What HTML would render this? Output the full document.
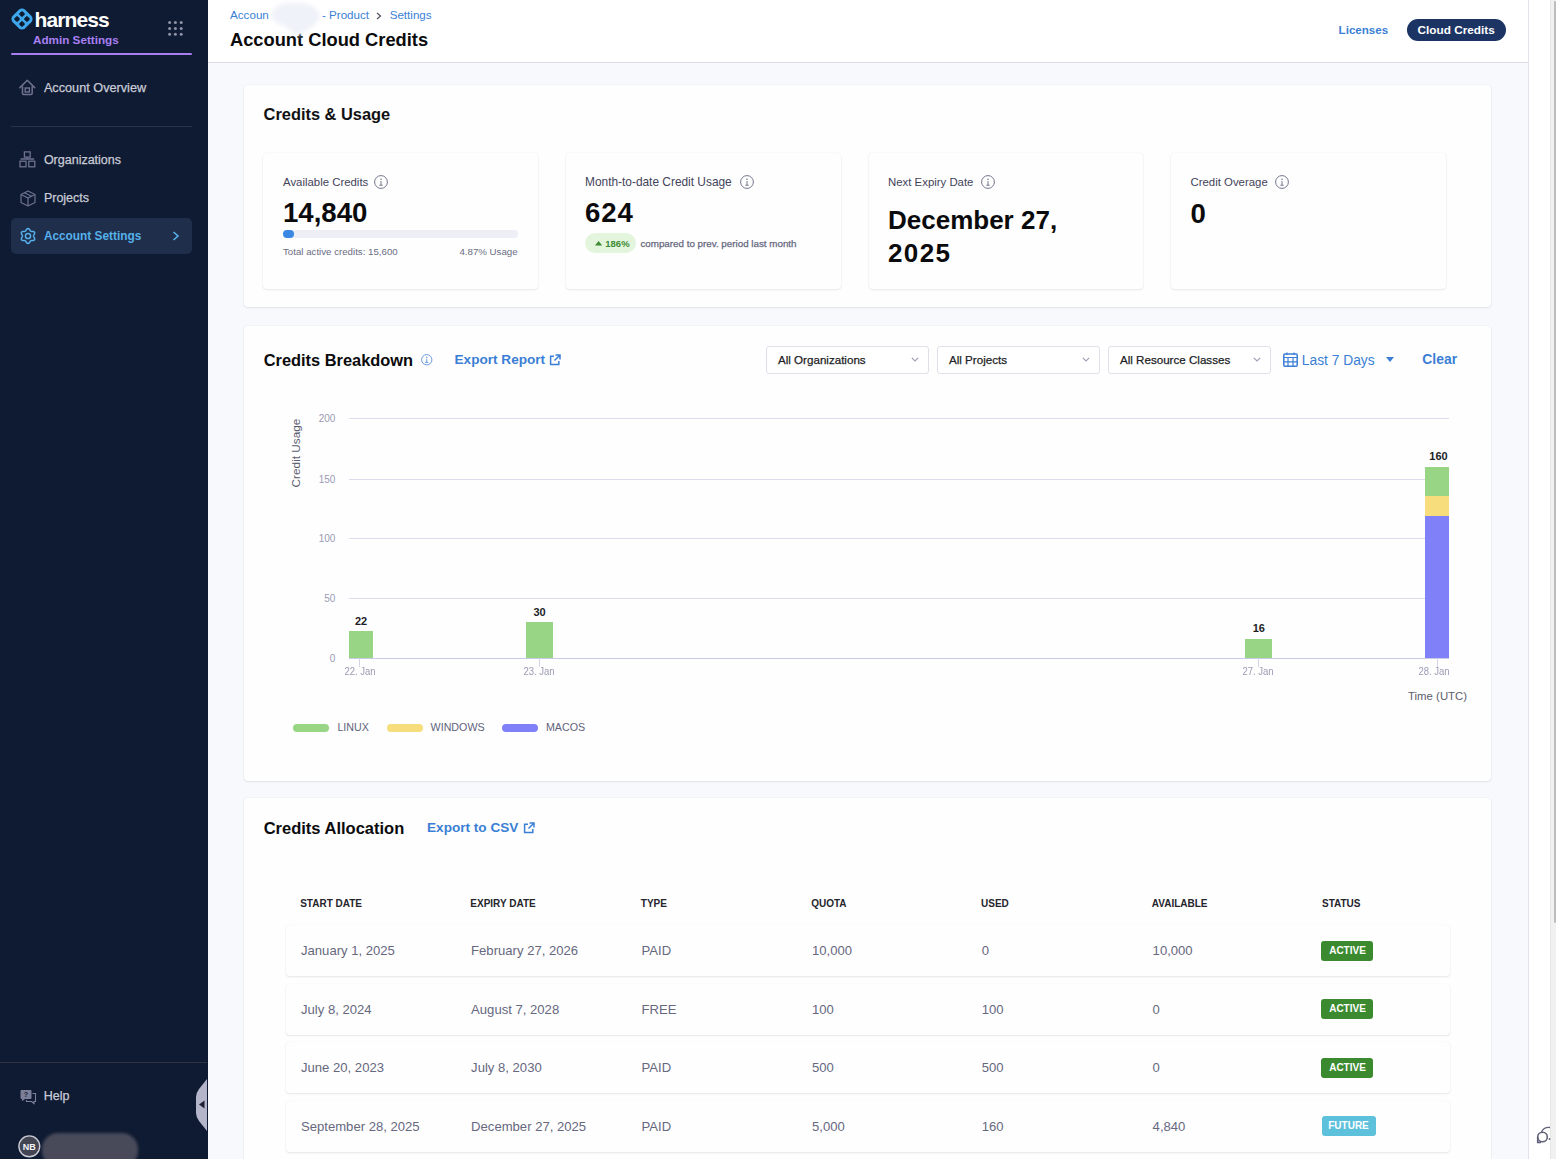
<!DOCTYPE html>
<html><head><meta charset="utf-8"><style>
html,body{margin:0;padding:0;width:1556px;height:1159px;overflow:hidden;background:#fafbfd}
body{position:relative;font-family:"Liberation Sans", sans-serif}
.t{position:absolute;white-space:nowrap;line-height:1}
svg{overflow:visible}
</style></head><body>
<div style="position:absolute;left:0;top:0;width:207.6px;height:1159px;background:#0f1b32"></div>
<svg style="position:absolute;left:11px;top:8px" width="22" height="22" viewBox="0 0 22 22" fill="none"><g transform="rotate(45 11 11)"><rect x="2.2" y="2.2" width="17.6" height="17.6" rx="4.5" fill="#3ea6ea"/>
<rect x="5.2" y="5.2" width="4.6" height="4.6" rx="1" fill="#0e1a2f"/><rect x="12.2" y="5.2" width="4.6" height="4.6" rx="1" fill="#0e1a2f"/>
<rect x="5.2" y="12.2" width="4.6" height="4.6" rx="1" fill="#0e1a2f"/><rect x="12.2" y="12.2" width="4.6" height="4.6" rx="1" fill="#0e1a2f"/></g></svg>
<div class="t" style="left:34.5px;top:8.72px;font-size:21px;color:#ffffff;font-weight:700;letter-spacing:-0.9px;">harness</div>
<div class="t" style="left:33px;top:33.60px;font-size:11.7px;color:#a97ff2;font-weight:700;">Admin Settings</div>
<div style="position:absolute;left:11px;top:52.5px;width:181px;height:2px;background:#a77ef0;border-radius:1px"></div>
<svg style="position:absolute;left:168px;top:20.5px" width="15" height="15" viewBox="0 0 15 15" fill="none"><circle cx="1.6" cy="1.6" r="1.5" fill="#8f93a8"/><circle cx="1.6" cy="7.4" r="1.5" fill="#8f93a8"/><circle cx="1.6" cy="13.2" r="1.5" fill="#8f93a8"/><circle cx="7.4" cy="1.6" r="1.5" fill="#8f93a8"/><circle cx="7.4" cy="7.4" r="1.5" fill="#8f93a8"/><circle cx="7.4" cy="13.2" r="1.5" fill="#8f93a8"/><circle cx="13.2" cy="1.6" r="1.5" fill="#8f93a8"/><circle cx="13.2" cy="7.4" r="1.5" fill="#8f93a8"/><circle cx="13.2" cy="13.2" r="1.5" fill="#8f93a8"/></svg>
<div class="t" style="left:43.9px;top:81.85px;font-size:12.7px;color:#c9cbd7;font-weight:400;-webkit-text-stroke:0.25px currentColor;">Account Overview</div>
<svg style="position:absolute;left:19px;top:79px" width="17" height="17" viewBox="0 0 17 17" fill="none"><path d="M0.9 8.6 L8.3 1.2 L15.7 8.6" stroke="#6e7290" stroke-width="1.5" stroke-linejoin="round" stroke-linecap="round"/><path d="M3.5 7.2 V14.2 Q3.5 15.4 4.7 15.4 H12 Q13.2 15.4 13.2 14.2 V7.2" stroke="#6e7290" stroke-width="1.5"/><rect x="6.2" y="9" width="4.2" height="4" stroke="#6e7290" stroke-width="1.4"/></svg>
<div style="position:absolute;left:11px;top:125.5px;width:181px;height:1px;background:#27334a"></div>
<div class="t" style="left:43.9px;top:154.02px;font-size:12.5px;color:#c9cbd7;font-weight:400;-webkit-text-stroke:0.25px currentColor;">Organizations</div>
<svg style="position:absolute;left:19px;top:151px" width="17" height="17" viewBox="0 0 17 17" fill="none"><rect x="5.4" y="0.9" width="5.8" height="5.2" stroke="#6e7290" stroke-width="1.3"/><path d="M8.3 6.1 V8 M1.5 8 H15.2" stroke="#6e7290" stroke-width="1.3"/><rect x="1" y="10.2" width="6" height="5.6" stroke="#6e7290" stroke-width="1.3"/><rect x="9.8" y="10.2" width="6" height="5.6" stroke="#6e7290" stroke-width="1.3"/></svg>
<div class="t" style="left:43.9px;top:192.02px;font-size:12.5px;color:#c9cbd7;font-weight:400;-webkit-text-stroke:0.25px currentColor;">Projects</div>
<svg style="position:absolute;left:19.5px;top:189.5px" width="16" height="17" viewBox="0 0 16 17" fill="none"><path d="M8 1 L15 4.5 V12.5 L8 16 L1 12.5 V4.5 Z" stroke="#6e7290" stroke-width="1.2" stroke-linejoin="round"/><path d="M1 4.5 L8 8 L15 4.5 M8 8 V16" stroke="#6e7290" stroke-width="1.2"/><path d="M4.5 2.8 L11.5 6.3" stroke="#6e7290" stroke-width="1.1"/></svg>
<div style="position:absolute;left:11px;top:218px;width:181px;height:36px;background:#1f2e4a;border-radius:5px"></div>
<div class="t" style="left:43.9px;top:230.97px;font-size:11.85px;color:#56b0ea;font-weight:700;">Account Settings</div>
<svg style="position:absolute;left:19.8px;top:227.5px" width="16" height="16" viewBox="0 0 16 16" fill="none"><circle cx="8" cy="8" r="2.6" stroke="#56b0ea" stroke-width="1.5"/><path d="M8.00 0.50 L8.64 0.66 L9.22 1.11 L9.68 1.72 L10.05 2.36 L10.38 2.89 L10.75 3.24 L11.23 3.38 L11.86 3.40 L12.60 3.40 L13.36 3.50 L14.03 3.78 L14.50 4.25 L14.68 4.89 L14.58 5.61 L14.28 6.32 L13.91 6.96 L13.61 7.51 L13.50 8.00 L13.61 8.49 L13.91 9.04 L14.28 9.68 L14.58 10.39 L14.68 11.11 L14.50 11.75 L14.03 12.22 L13.36 12.50 L12.60 12.60 L11.86 12.60 L11.23 12.62 L10.75 12.76 L10.38 13.11 L10.05 13.64 L9.68 14.28 L9.22 14.89 L8.64 15.34 L8.00 15.50 L7.36 15.34 L6.78 14.89 L6.32 14.28 L5.95 13.64 L5.62 13.11 L5.25 12.76 L4.77 12.62 L4.14 12.60 L3.40 12.60 L2.64 12.50 L1.97 12.22 L1.50 11.75 L1.32 11.11 L1.42 10.39 L1.72 9.68 L2.09 9.04 L2.39 8.49 L2.50 8.00 L2.39 7.51 L2.09 6.96 L1.72 6.32 L1.42 5.61 L1.32 4.89 L1.50 4.25 L1.97 3.78 L2.64 3.50 L3.40 3.40 L4.14 3.40 L4.77 3.38 L5.25 3.24 L5.62 2.89 L5.95 2.36 L6.32 1.72 L6.78 1.11 L7.36 0.66 L8.00 0.50 Z" stroke="#56b0ea" stroke-width="1.5" stroke-linejoin="round"/></svg>
<svg style="position:absolute;left:172px;top:231px" width="8" height="10" viewBox="0 0 8 10" fill="none"><path d="M1.5 1 L6 5 L1.5 9" stroke="#56b0ea" stroke-width="1.6"/></svg>
<div style="position:absolute;left:0px;top:1062px;width:207px;height:1px;background:#2c3446"></div>
<svg style="position:absolute;left:19.5px;top:1089px" width="17" height="16" viewBox="0 0 17 16" fill="none"><path d="M1 1.5 H11 V9.5 H5 L2.5 11.5 V9.5 H1 Z" fill="#7c7f98" stroke="#7c7f98" stroke-width="1"/><path d="M12.5 4.5 H15.5 V12.5 H14 V14.5 L11.5 12.5 H6.5 V11" stroke="#7c7f98" stroke-width="1.1"/><text x="6" y="8.3" font-size="7" font-weight="700" fill="#0f1b32" text-anchor="middle" font-family="Liberation Sans">?</text></svg>
<div class="t" style="left:43.8px;top:1089.92px;font-size:12.5px;color:#c9cbd7;font-weight:400;-webkit-text-stroke:0.25px currentColor;">Help</div>
<svg style="position:absolute;left:196px;top:1079px" width="11" height="52" viewBox="0 0 11 52" fill="none"><path d="M11 0 L11 52 L3 42 Q0 38 0 34 V18 Q0 14 3 10 Z" fill="#b4b4ca"/><path d="M8.5 21.5 V29.5 L3 25.5 Z" fill="#1c2033"/></svg>
<div style="position:absolute;left:42px;top:1133px;width:96px;height:34px;background:#484a5a;border-radius:16px;filter:blur(1.6px)"></div>
<svg style="position:absolute;left:18.2px;top:1134.8px" width="23" height="23" viewBox="0 0 23 23" fill="none"><circle cx="11.3" cy="11.3" r="10.4" fill="#434552" stroke="#c9cad6" stroke-width="1.4"/><text x="11.3" y="14.6" font-size="9" font-weight="700" fill="#f4f4f8" text-anchor="middle" font-family="Liberation Sans">NB</text></svg>
<div style="position:absolute;left:207.6px;top:0px;width:1320.4px;height:1159px;background:#f8f9fc"></div>
<div style="position:absolute;left:207.6px;top:0px;width:1320.4px;height:62px;background:#ffffff"></div>
<div style="position:absolute;left:207.6px;top:62px;width:1320.4px;height:1px;background:#dadbe6"></div>
<div style="position:absolute;left:1528px;top:0px;width:1px;height:1159px;background:#e1e2ea"></div>
<div style="position:absolute;left:1529px;top:0px;width:22px;height:1159px;background:#ffffff"></div>
<div style="position:absolute;left:1550px;top:0px;width:6px;height:1159px;background:#f1f1f1;border-left:1px solid #e6e6e6"></div>
<div style="position:absolute;left:1554px;top:1px;width:2px;height:922px;background:#bdbdbd;border-radius:1px"></div>
<svg style="position:absolute;left:1536px;top:1125px" width="15" height="20" viewBox="0 0 15 20" fill="none"><path d="M14 2.5 Q8 1.8 5.5 7" stroke="#60627a" stroke-width="1.4" fill="none"/><circle cx="6.5" cy="12" r="4.8" stroke="#60627a" stroke-width="1.6" fill="none"/><path d="M1.7 12 V17.5 H5" stroke="#60627a" stroke-width="1.6" fill="none"/><circle cx="13.5" cy="14" r="0.9" fill="#60627a"/></svg>
<div class="t" style="left:230px;top:8.94px;font-size:11.65px;color:#3a7fd5;font-weight:400;">Accoun</div>
<div class="t" style="left:322px;top:8.98px;font-size:11.6px;color:#3a7fd5;font-weight:400;">- Product</div>
<svg style="position:absolute;left:376px;top:12px" width="6" height="8" viewBox="0 0 6 8" fill="none"><path d="M1 1 L4.5 4 L1 7" stroke="#555866" stroke-width="1.3"/></svg>
<div class="t" style="left:389.7px;top:8.98px;font-size:11.6px;color:#3a7fd5;font-weight:400;">Settings</div>
<div class="t" style="left:230px;top:31.31px;font-size:18.3px;color:#0b0b0d;font-weight:700;">Account Cloud Credits</div>
<svg style="position:absolute;left:260px;top:0px" width="70" height="45" viewBox="0 0 70 45" fill="none"><defs><filter id="bl" x="-30%" y="-30%" width="160%" height="160%"><feGaussianBlur stdDeviation="2.3"/></filter></defs><path d="M11 15 Q14 5 26 3 L44 3 Q58 6 60 16 Q58 24 50 28 L40 35 Q37 37 35 34 L24 26 Q11 22 11 15 Z" fill="#f0f2f9" filter="url(#bl)"/></svg>
<div class="t" style="left:1338.6px;top:23.88px;font-size:11.6px;color:#3a7fd5;font-weight:700;">Licenses</div>
<div style="position:absolute;left:1406.5px;top:19px;width:99.5px;height:22px;background:#1c3463;border-radius:11px"></div>
<div class="t" style="left:1417.5px;top:24.51px;font-size:11.8px;color:#ffffff;font-weight:700;">Cloud Credits</div>
<div style="position:absolute;left:244px;top:85px;width:1247px;height:222px;background:#fefefe;border-radius:4px;box-shadow:0 0 2px rgba(40,41,61,0.07),0 1px 2px rgba(96,97,112,0.12)"></div>
<div class="t" style="left:263.6px;top:106.02px;font-size:16.4px;color:#111114;font-weight:700;">Credits &amp; Usage</div>
<div style="position:absolute;left:263px;top:153.3px;width:274.5px;height:135.7px;background:#fefefe;border-radius:4px;box-shadow:0 0 2px rgba(40,41,61,0.07),0 1px 2px rgba(96,97,112,0.12)"></div>
<div style="position:absolute;left:566px;top:153.3px;width:274.5px;height:135.7px;background:#fefefe;border-radius:4px;box-shadow:0 0 2px rgba(40,41,61,0.07),0 1px 2px rgba(96,97,112,0.12)"></div>
<div style="position:absolute;left:868.5px;top:153.3px;width:274.5px;height:135.7px;background:#fefefe;border-radius:4px;box-shadow:0 0 2px rgba(40,41,61,0.07),0 1px 2px rgba(96,97,112,0.12)"></div>
<div style="position:absolute;left:1171px;top:153.3px;width:274.5px;height:135.7px;background:#fefefe;border-radius:4px;box-shadow:0 0 2px rgba(40,41,61,0.07),0 1px 2px rgba(96,97,112,0.12)"></div>
<div class="t" style="left:283px;top:176.95px;font-size:11.4px;color:#43445a;font-weight:400;">Available Credits</div>
<svg style="position:absolute;left:374.4px;top:174.7px" width="14" height="14" viewBox="0 0 14 14" fill="none"><circle cx="7.0" cy="7.0" r="6.4" stroke="#74778e" stroke-width="1"/><path d="M7.0 6.02 V10.219999999999999 M5.4 10.219999999999999 H8.6" stroke="#74778e" stroke-width="1"/><circle cx="7.0" cy="4.2" r="0.8" fill="#74778e"/></svg>
<div class="t" style="left:283px;top:199.34px;font-size:27.6px;color:#0b0b0d;font-weight:700;">14,840</div>
<div style="position:absolute;left:283px;top:230.2px;width:234.6px;height:8px;background:#eeeff6;border-radius:4px"></div>
<div style="position:absolute;left:283px;top:230.2px;width:11px;height:8px;background:#3b88e3;border-radius:4px"></div>
<div class="t" style="left:283px;top:246.99px;font-size:9.7px;color:#6b6d85;font-weight:400;">Total active credits: 15,600</div>
<div class="t" style="right:1038.4px;top:246.99px;font-size:9.7px;color:#6b6d85;font-weight:400;">4.87% Usage</div>
<div class="t" style="left:585px;top:176.53px;font-size:11.9px;color:#43445a;font-weight:400;">Month-to-date Credit Usage</div>
<svg style="position:absolute;left:740px;top:174.7px" width="14" height="14" viewBox="0 0 14 14" fill="none"><circle cx="7.0" cy="7.0" r="6.4" stroke="#74778e" stroke-width="1"/><path d="M7.0 6.02 V10.219999999999999 M5.4 10.219999999999999 H8.6" stroke="#74778e" stroke-width="1"/><circle cx="7.0" cy="4.2" r="0.8" fill="#74778e"/></svg>
<div class="t" style="left:585px;top:199.34px;font-size:27.6px;color:#0b0b0d;font-weight:700;letter-spacing:0.9px;">624</div>
<div style="position:absolute;left:585px;top:232.8px;width:51px;height:20.2px;background:#e3f6dd;border-radius:10px"></div>
<svg style="position:absolute;left:595.2px;top:240.5px" width="7.2" height="4.6" viewBox="0 0 7.2 4.6" fill="none"><path d="M0 4.6 L3.6 0 L7.2 4.6 Z" fill="#3d8a34"/></svg>
<div class="t" style="left:605.3px;top:238.56px;font-size:9.5px;color:#3d8a34;font-weight:700;">186%</div>
<div class="t" style="left:640.4px;top:238.50px;font-size:9.8px;color:#66687f;font-weight:400;-webkit-text-stroke:0.25px currentColor;">compared to prev. period last month</div>
<div class="t" style="left:888px;top:176.95px;font-size:11.4px;color:#43445a;font-weight:400;">Next Expiry Date</div>
<svg style="position:absolute;left:980.6px;top:174.7px" width="14" height="14" viewBox="0 0 14 14" fill="none"><circle cx="7.0" cy="7.0" r="6.4" stroke="#74778e" stroke-width="1"/><path d="M7.0 6.02 V10.219999999999999 M5.4 10.219999999999999 H8.6" stroke="#74778e" stroke-width="1"/><circle cx="7.0" cy="4.2" r="0.8" fill="#74778e"/></svg>
<div class="t" style="left:888px;top:207.39px;font-size:26px;color:#0b0b0d;font-weight:700;">December 27,</div>
<div class="t" style="left:888px;top:239.99px;font-size:26px;color:#0b0b0d;font-weight:700;letter-spacing:1.4px;">2025</div>
<div class="t" style="left:1190.5px;top:176.95px;font-size:11.4px;color:#43445a;font-weight:400;">Credit Overage</div>
<svg style="position:absolute;left:1275px;top:174.7px" width="14" height="14" viewBox="0 0 14 14" fill="none"><circle cx="7.0" cy="7.0" r="6.4" stroke="#74778e" stroke-width="1"/><path d="M7.0 6.02 V10.219999999999999 M5.4 10.219999999999999 H8.6" stroke="#74778e" stroke-width="1"/><circle cx="7.0" cy="4.2" r="0.8" fill="#74778e"/></svg>
<div class="t" style="left:1190.5px;top:199.64px;font-size:27.6px;color:#0b0b0d;font-weight:700;">0</div>
<div style="position:absolute;left:244px;top:325.5px;width:1247px;height:455px;background:#fefefe;border-radius:4px;box-shadow:0 0 2px rgba(40,41,61,0.07),0 1px 2px rgba(96,97,112,0.12)"></div>
<div class="t" style="left:263.7px;top:352.12px;font-size:16.4px;color:#0b0b0d;font-weight:700;">Credits Breakdown</div>
<svg style="position:absolute;left:420.8px;top:354px" width="11.5" height="11.5" viewBox="0 0 11.5 11.5" fill="none"><circle cx="5.75" cy="5.75" r="5.15" stroke="#6a9be0" stroke-width="1"/><path d="M5.75 4.945 V8.395 M4.15 8.395 H7.35" stroke="#6a9be0" stroke-width="1"/><circle cx="5.75" cy="3.4499999999999997" r="0.8" fill="#6a9be0"/></svg>
<div class="t" style="left:454.5px;top:353.49px;font-size:13.6px;color:#3a7fd5;font-weight:700;">Export Report</div>
<svg style="position:absolute;left:549.2px;top:353.6px" width="12" height="12" viewBox="0 0 12 12" fill="none"><path d="M5 2.2 H1.6 V10.4 H9.8 V7" stroke="#3a7fd5" stroke-width="1.5"/><path d="M6.5 1 H11 V5.5 M11 1 L5.5 6.5" stroke="#3a7fd5" stroke-width="1.5"/></svg>
<div style="position:absolute;left:766px;top:345.5px;width:163px;height:28.5px;background:#fff;border:1px solid #dedfe9;border-radius:3px;box-sizing:border-box"></div>
<div class="t" style="left:778px;top:354.38px;font-size:11.6px;color:#1d1e26;font-weight:400;-webkit-text-stroke:0.25px currentColor;">All Organizations</div>
<svg style="position:absolute;left:910.5px;top:357.2px" width="8" height="5" viewBox="0 0 8 5" fill="none"><path d="M0.8 0.8 L4 4 L7.2 0.8" stroke="#9fa1b6" stroke-width="1.2"/></svg>
<div style="position:absolute;left:937px;top:345.5px;width:163px;height:28.5px;background:#fff;border:1px solid #dedfe9;border-radius:3px;box-sizing:border-box"></div>
<div class="t" style="left:949px;top:354.38px;font-size:11.6px;color:#1d1e26;font-weight:400;-webkit-text-stroke:0.25px currentColor;">All Projects</div>
<svg style="position:absolute;left:1081.5px;top:357.2px" width="8" height="5" viewBox="0 0 8 5" fill="none"><path d="M0.8 0.8 L4 4 L7.2 0.8" stroke="#9fa1b6" stroke-width="1.2"/></svg>
<div style="position:absolute;left:1108px;top:345.5px;width:163px;height:28.5px;background:#fff;border:1px solid #dedfe9;border-radius:3px;box-sizing:border-box"></div>
<div class="t" style="left:1120px;top:354.38px;font-size:11.6px;color:#1d1e26;font-weight:400;-webkit-text-stroke:0.25px currentColor;">All Resource Classes</div>
<svg style="position:absolute;left:1252.5px;top:357.2px" width="8" height="5" viewBox="0 0 8 5" fill="none"><path d="M0.8 0.8 L4 4 L7.2 0.8" stroke="#9fa1b6" stroke-width="1.2"/></svg>
<svg style="position:absolute;left:1283px;top:352px" width="15" height="15" viewBox="0 0 15 15" fill="none"><rect x="0.8" y="2" width="13.4" height="12.2" rx="1" stroke="#3a7fd5" stroke-width="1.5"/><path d="M0.8 5.5 H14.2 M4 0.5 V3 M11 0.5 V3 M5 5.5 V14 M10 5.5 V14 M0.8 9.8 H14.2" stroke="#3a7fd5" stroke-width="1.2"/></svg>
<div class="t" style="left:1301.8px;top:353.72px;font-size:13.8px;color:#3a7fd5;font-weight:400;">Last 7 Days</div>
<svg style="position:absolute;left:1386px;top:357px" width="8" height="5" viewBox="0 0 8 5" fill="none"><path d="M0 0 H8 L4 5 Z" fill="#3a7fd5"/></svg>
<div class="t" style="left:1422.3px;top:353.43px;font-size:13.9px;color:#3a7fd5;font-weight:700;">Clear</div>
<div style="position:absolute;left:349px;top:418px;width:1100px;height:1px;background:#dcddec"></div>
<div style="position:absolute;left:349px;top:479px;width:1100px;height:1px;background:#dcddec"></div>
<div style="position:absolute;left:349px;top:538px;width:1100px;height:1px;background:#dcddec"></div>
<div style="position:absolute;left:349px;top:598px;width:1100px;height:1px;background:#dcddec"></div>
<div style="position:absolute;left:349px;top:657.5px;width:1100px;height:1px;background:#c9cbe6"></div>
<div class="t" style="right:1220.7px;top:414.24px;font-size:10px;color:#9a9bb3;font-weight:400;">200</div>
<div class="t" style="right:1220.7px;top:475.24px;font-size:10px;color:#9a9bb3;font-weight:400;">150</div>
<div class="t" style="right:1220.7px;top:534.24px;font-size:10px;color:#9a9bb3;font-weight:400;">100</div>
<div class="t" style="right:1220.7px;top:594.24px;font-size:10px;color:#9a9bb3;font-weight:400;">50</div>
<div class="t" style="right:1220.7px;top:654.24px;font-size:10px;color:#9a9bb3;font-weight:400;">0</div>
<div class="t" style="left:255.60000000000002px;top:446.9px;width:80px;height:12px;line-height:12px;text-align:center;font-size:11.8px;color:#5a5b70;transform:rotate(-90deg)">Credit Usage</div>
<div style="position:absolute;left:349.2px;top:631.4792px;width:24.19999999999999px;height:26.320799999999963px;background:#98d685"></div>
<div class="t" style="left:161px;width:400px;text-align:center;top:616.19px;font-size:11px;color:#1d1e26;font-weight:700;">22</div>
<div style="position:absolute;left:526px;top:621.9079999999999px;width:27px;height:35.89200000000005px;background:#98d685"></div>
<div class="t" style="left:339.5px;width:400px;text-align:center;top:606.69px;font-size:11px;color:#1d1e26;font-weight:700;">30</div>
<div style="position:absolute;left:1245px;top:638.6576px;width:27.299999999999955px;height:19.142399999999952px;background:#98d685"></div>
<div class="t" style="left:1058.8px;width:400px;text-align:center;top:623.19px;font-size:11px;color:#1d1e26;font-weight:700;">16</div>
<div style="position:absolute;left:1424.5px;top:467.4px;width:24.6px;height:29px;background:#98d685"></div>
<div style="position:absolute;left:1424.5px;top:496.3px;width:24.6px;height:19.4px;background:#f7dd7c"></div>
<div style="position:absolute;left:1424.5px;top:515.7px;width:24.6px;height:142.1px;background:#8080f8"></div>
<div class="t" style="left:1238.5px;width:400px;text-align:center;top:451.09px;font-size:11px;color:#1d1e26;font-weight:700;">160</div>
<div style="position:absolute;left:359.2px;top:658px;width:1px;height:8.5px;background:#d3d5ea"></div>
<div class="t" style="left:159.5px;width:400px;text-align:center;top:666.93px;font-size:10px;color:#9a9bb3;font-weight:400;transform:scaleX(0.95)">22. Jan</div>
<div style="position:absolute;left:538.8px;top:658px;width:1px;height:8.5px;background:#d3d5ea"></div>
<div class="t" style="left:339px;width:400px;text-align:center;top:666.93px;font-size:10px;color:#9a9bb3;font-weight:400;transform:scaleX(0.95)">23. Jan</div>
<div style="position:absolute;left:1257.8px;top:658px;width:1px;height:8.5px;background:#d3d5ea"></div>
<div class="t" style="left:1058px;width:400px;text-align:center;top:666.93px;font-size:10px;color:#9a9bb3;font-weight:400;transform:scaleX(0.95)">27. Jan</div>
<div style="position:absolute;left:1437.2px;top:658px;width:1px;height:8.5px;background:#d3d5ea"></div>
<div class="t" style="left:1234px;width:400px;text-align:center;top:666.93px;font-size:10px;color:#9a9bb3;font-weight:400;transform:scaleX(0.95)">28. Jan</div>
<div class="t" style="right:88.90000000000009px;top:691.35px;font-size:11.4px;color:#5c5d6b;font-weight:400;">Time (UTC)</div>
<div style="position:absolute;left:293.3px;top:724.4px;width:36px;height:7.4px;background:#98d685;border-radius:4px"></div>
<div class="t" style="left:337.4px;top:721.64px;font-size:10.7px;color:#62637b;font-weight:400;">LINUX</div>
<div style="position:absolute;left:387.4px;top:724.4px;width:36px;height:7.4px;background:#f7dd7c;border-radius:4px"></div>
<div class="t" style="left:430.6px;top:721.64px;font-size:10.7px;color:#62637b;font-weight:400;">WINDOWS</div>
<div style="position:absolute;left:502.4px;top:724.4px;width:36px;height:7.4px;background:#8080f8;border-radius:4px"></div>
<div class="t" style="left:545.9px;top:721.64px;font-size:10.7px;color:#62637b;font-weight:400;">MACOS</div>
<div style="position:absolute;left:244px;top:798px;width:1247px;height:380px;background:#fefefe;border-radius:4px;box-shadow:0 0 2px rgba(40,41,61,0.07),0 1px 2px rgba(96,97,112,0.12)"></div>
<div class="t" style="left:263.7px;top:820.33px;font-size:16.5px;color:#0b0b0d;font-weight:700;">Credits Allocation</div>
<div class="t" style="left:427px;top:821.29px;font-size:13.6px;color:#3a7fd5;font-weight:700;">Export to CSV</div>
<svg style="position:absolute;left:523px;top:822.3px" width="12" height="12" viewBox="0 0 12 12" fill="none"><path d="M5 2.2 H1.6 V10.4 H9.8 V7" stroke="#3a7fd5" stroke-width="1.5"/><path d="M6.5 1 H11 V5.5 M11 1 L5.5 6.5" stroke="#3a7fd5" stroke-width="1.5"/></svg>
<div class="t" style="left:300.2px;top:899.03px;font-size:10px;color:#25252c;font-weight:700;">START DATE</div>
<div class="t" style="left:470.3px;top:899.03px;font-size:10px;color:#25252c;font-weight:700;">EXPIRY DATE</div>
<div class="t" style="left:640.8px;top:899.03px;font-size:10px;color:#25252c;font-weight:700;">TYPE</div>
<div class="t" style="left:811.2px;top:899.03px;font-size:10px;color:#25252c;font-weight:700;">QUOTA</div>
<div class="t" style="left:981px;top:899.03px;font-size:10px;color:#25252c;font-weight:700;">USED</div>
<div class="t" style="left:1151.8px;top:899.03px;font-size:10px;color:#25252c;font-weight:700;">AVAILABLE</div>
<div class="t" style="left:1322px;top:899.03px;font-size:10px;color:#25252c;font-weight:700;">STATUS</div>
<div style="position:absolute;left:285.5px;top:925.0px;width:1164.3px;height:51px;background:#fefefe;border-radius:4px;box-shadow:0 0 1.5px rgba(40,41,61,0.06),0 1px 2px rgba(96,97,112,0.14)"></div>
<div class="t" style="left:301.0px;top:944.11px;font-size:13.1px;color:#66687e;font-weight:400;">January 1, 2025</div>
<div class="t" style="left:471.1px;top:944.11px;font-size:13.1px;color:#66687e;font-weight:400;">February 27, 2026</div>
<div class="t" style="left:641.5999999999999px;top:944.11px;font-size:13.1px;color:#66687e;font-weight:400;">PAID</div>
<div class="t" style="left:812.0px;top:944.11px;font-size:13.1px;color:#66687e;font-weight:400;">10,000</div>
<div class="t" style="left:981.8px;top:944.11px;font-size:13.1px;color:#66687e;font-weight:400;">0</div>
<div class="t" style="left:1152.6px;top:944.11px;font-size:13.1px;color:#66687e;font-weight:400;">10,000</div>
<div style="position:absolute;left:1321.3px;top:940.5px;width:51.8px;height:20.2px;background:#3b8a2f;border-radius:3px"></div>
<div class="t" style="left:1147.5px;width:400px;text-align:center;top:945.93px;font-size:10px;color:#ffffff;font-weight:700;">ACTIVE</div>
<div style="position:absolute;left:285.5px;top:983.5px;width:1164.3px;height:51px;background:#fefefe;border-radius:4px;box-shadow:0 0 1.5px rgba(40,41,61,0.06),0 1px 2px rgba(96,97,112,0.14)"></div>
<div class="t" style="left:301.0px;top:1002.61px;font-size:13.1px;color:#66687e;font-weight:400;">July 8, 2024</div>
<div class="t" style="left:471.1px;top:1002.61px;font-size:13.1px;color:#66687e;font-weight:400;">August 7, 2028</div>
<div class="t" style="left:641.5999999999999px;top:1002.61px;font-size:13.1px;color:#66687e;font-weight:400;">FREE</div>
<div class="t" style="left:812.0px;top:1002.61px;font-size:13.1px;color:#66687e;font-weight:400;">100</div>
<div class="t" style="left:981.8px;top:1002.61px;font-size:13.1px;color:#66687e;font-weight:400;">100</div>
<div class="t" style="left:1152.6px;top:1002.61px;font-size:13.1px;color:#66687e;font-weight:400;">0</div>
<div style="position:absolute;left:1321.3px;top:999.0px;width:51.8px;height:20.2px;background:#3b8a2f;border-radius:3px"></div>
<div class="t" style="left:1147.5px;width:400px;text-align:center;top:1004.43px;font-size:10px;color:#ffffff;font-weight:700;">ACTIVE</div>
<div style="position:absolute;left:285.5px;top:1042.0px;width:1164.3px;height:51px;background:#fefefe;border-radius:4px;box-shadow:0 0 1.5px rgba(40,41,61,0.06),0 1px 2px rgba(96,97,112,0.14)"></div>
<div class="t" style="left:301.0px;top:1061.11px;font-size:13.1px;color:#66687e;font-weight:400;">June 20, 2023</div>
<div class="t" style="left:471.1px;top:1061.11px;font-size:13.1px;color:#66687e;font-weight:400;">July 8, 2030</div>
<div class="t" style="left:641.5999999999999px;top:1061.11px;font-size:13.1px;color:#66687e;font-weight:400;">PAID</div>
<div class="t" style="left:812.0px;top:1061.11px;font-size:13.1px;color:#66687e;font-weight:400;">500</div>
<div class="t" style="left:981.8px;top:1061.11px;font-size:13.1px;color:#66687e;font-weight:400;">500</div>
<div class="t" style="left:1152.6px;top:1061.11px;font-size:13.1px;color:#66687e;font-weight:400;">0</div>
<div style="position:absolute;left:1321.3px;top:1057.5px;width:51.8px;height:20.2px;background:#3b8a2f;border-radius:3px"></div>
<div class="t" style="left:1147.5px;width:400px;text-align:center;top:1062.94px;font-size:10px;color:#ffffff;font-weight:700;">ACTIVE</div>
<div style="position:absolute;left:285.5px;top:1100.5px;width:1164.3px;height:51px;background:#fefefe;border-radius:4px;box-shadow:0 0 1.5px rgba(40,41,61,0.06),0 1px 2px rgba(96,97,112,0.14)"></div>
<div class="t" style="left:301.0px;top:1119.61px;font-size:13.1px;color:#66687e;font-weight:400;">September 28, 2025</div>
<div class="t" style="left:471.1px;top:1119.61px;font-size:13.1px;color:#66687e;font-weight:400;">December 27, 2025</div>
<div class="t" style="left:641.5999999999999px;top:1119.61px;font-size:13.1px;color:#66687e;font-weight:400;">PAID</div>
<div class="t" style="left:812.0px;top:1119.61px;font-size:13.1px;color:#66687e;font-weight:400;">5,000</div>
<div class="t" style="left:981.8px;top:1119.61px;font-size:13.1px;color:#66687e;font-weight:400;">160</div>
<div class="t" style="left:1152.6px;top:1119.61px;font-size:13.1px;color:#66687e;font-weight:400;">4,840</div>
<div style="position:absolute;left:1321.5px;top:1116.1px;width:54px;height:20px;background:#5ec1dc;border-radius:3px"></div>
<div class="t" style="left:1148.5px;width:400px;text-align:center;top:1121.44px;font-size:10px;color:#ffffff;font-weight:700;">FUTURE</div>
</body></html>
